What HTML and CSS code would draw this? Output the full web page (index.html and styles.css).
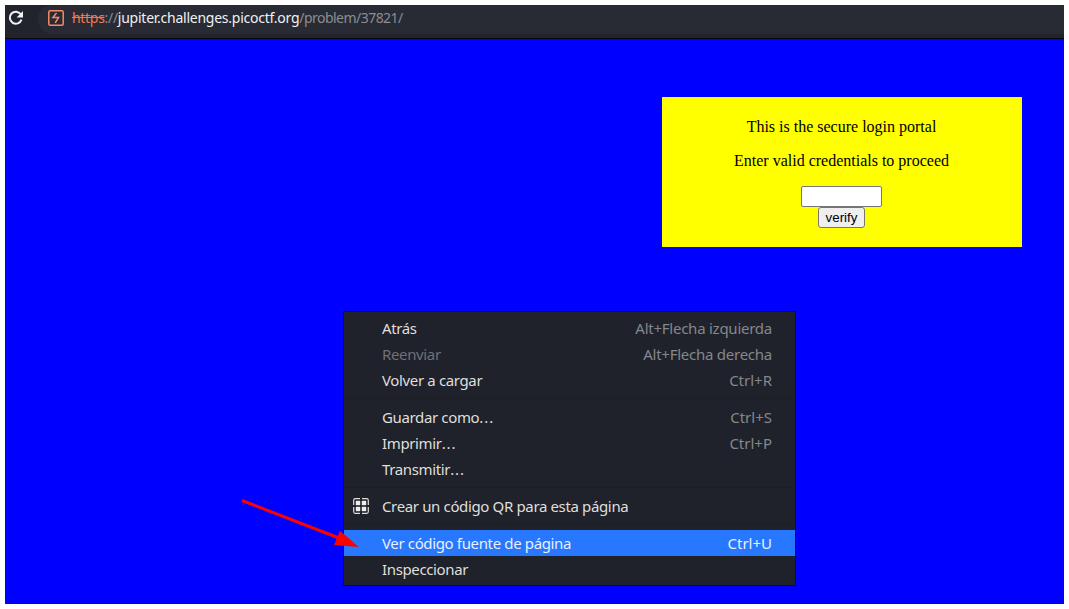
FILE: index.html
```html
<!DOCTYPE html>
<html lang="es">
<head>
<meta charset="utf-8">
<title>Login portal</title>
<link rel="stylesheet" href="styles.css">
</head>
<body>
<div class="browser">
  <header class="toolbar">
    <svg class="reload" width="16" height="16" viewBox="0 0 16 16"><path d="M12.8 4.3A6 6 0 1 0 13.5 9.7" fill="none" stroke="#f2f2f2" stroke-width="2"/><path d="M15 1v6.4H8.6z" fill="#f2f2f2"/></svg>
    <div class="address">
      <svg class="site" width="16" height="16" viewBox="0 0 16 16" fill="none" stroke="#f58b65"><rect x=".8" y=".8" width="14.4" height="14.4" rx="1.5" stroke-width="1.5"/><path d="M8.5 3 4.9 7.5h5.7L7.2 12.8" stroke-width="1.5"/></svg>
      <div class="url"><span class="scheme">https</span><span class="dim">://</span><span class="host">jupiter.challenges.picoctf.org</span><span class="dim path">/problem/37821/</span></div>
    </div>
  </header>
  <main class="page">
    <form class="login">
      <p>This is the secure login portal</p>
      <p>Enter valid credentials to proceed</p>
      <input class="field" type="text" aria-label="Password">
      <button class="verify" type="button">verify</button>
    </form>
  </main>
</div>
<nav class="menu">
  <div class="item"><span class="label">Atrás</span><kbd class="long">Alt+Flecha izquierda</kbd></div>
  <div class="item disabled"><span class="label">Reenviar</span><kbd class="long">Alt+Flecha derecha</kbd></div>
  <div class="item"><span class="label">Volver a cargar</span><kbd>Ctrl+R</kbd></div>
  <div class="separator"></div>
  <div class="item"><span class="label">Guardar como<span class="dots">...</span></span><kbd>Ctrl+S</kbd></div>
  <div class="item"><span class="label">Imprimir<span class="dots">...</span></span><kbd>Ctrl+P</kbd></div>
  <div class="item"><span class="label">Transmitir<span class="dots">...</span></span></div>
  <div class="separator"></div>
  <div class="item with-icon">
    <svg class="qr" width="16" height="16" viewBox="0 0 16 16"><path d="M.7 5V2.2Q.7.7 2.2.7H7M9 .7h4.8q1.5 0 1.5 1.5V7M15.3 9v4.8q0 1.5-1.5 1.5H9M7 15.3H2.2Q.7 15.3.7 13.8V9M.7 7V5" fill="none" stroke="#deded9" stroke-width="1.2"/><path d="M3 3h4v4H3zM9 3h4v4H9zM3 9h4v4H3zM9 9h4v4H9z" fill="#eeeeea" stroke="#eeeeea" stroke-width=".4"/></svg>
    <span class="label">Crear un código QR para esta página</span>
  </div>
  <div class="separator"></div>
  <div class="item selected"><span class="label">Ver código fuente de página</span><kbd>Ctrl+U</kbd></div>
  <div class="item"><span class="label">Inspeccionar</span></div>
</nav>
<svg class="arrow" width="120" height="52" viewBox="0 0 120 52"><path d="M2 3.5 99 41" stroke="#f00" stroke-width="3"/><path d="M100 33.8 118.7 50 94 48z" fill="#f00"/></svg>
</body>
</html>
```
FILE: styles.css
```css
body {
  margin: 0;
  height: 609px;
  overflow: hidden;
  background: #fff;
}

.browser {
  display: flex;
  flex-direction: column;
  width: 1059px;
  height: 599px;
  margin: 5px;
  background: #00f;
}

.toolbar {
  display: flex;
  box-sizing: border-box;
  height: 34px;
  padding-left: 3px;
  border-bottom: 1px solid #08090d;
  background: #22242d;
}

.reload {
  margin: 5px 14px 0 0;
}

.address {
  display: flex;
  flex: 1;
  height: 29px;
  padding-left: 10px;
  border-radius: 15px 0 0 15px;
  background: #282a34;
}

.site {
  margin: 5px 8px 0 0;
}

.url {
  font: 14px/26px "Noto Sans", sans-serif;
  letter-spacing: -0.3px;
  white-space: nowrap;
}

.scheme {
  color: #f07850;
  text-decoration: line-through;
}

.dim {
  color: #8b8e91;
}

.host {
  color: #f0f1f2;
  letter-spacing: -0.25px;
}

.path {
  letter-spacing: -0.53px;
}

.page {
  display: flex;
  flex: 1;
  justify-content: flex-end;
  padding: 58px 42px 0 0;
}

.login {
  display: flex;
  flex-direction: column;
  align-items: center;
  box-sizing: border-box;
  width: 360px;
  height: 150px;
  padding: 21px 1px 0 0;
  background: #ff0;
  color: #000;
  font: 16px/18px "Liberation Serif", serif;
}

.login p {
  margin: 0 0 16px;
}

.field {
  box-sizing: border-box;
  width: 81px;
  height: 21px;
  border: 1px solid #767676;
  border-radius: 2px;
  background: #fff;
}

.verify {
  box-sizing: border-box;
  width: 47px;
  height: 21px;
  padding: 0;
  border: 1px solid #767676;
  border-radius: 3px;
  background: #efefef;
  color: #000;
  font: 13.333px/19px "Liberation Sans", sans-serif;
}

.menu {
  position: absolute;
  top: 311px;
  left: 343px;
  box-sizing: border-box;
  width: 453px;
  height: 275px;
  padding: 3px 0;
  border: 1px solid #111218;
  background: #20222b;
  color: #dfdfdb;
  font: 15px/26px "Noto Sans", sans-serif;
}

.item {
  display: flex;
  justify-content: space-between;
  height: 26px;
  padding: 0 23px 0 38px;
  white-space: nowrap;
}

.label {
  letter-spacing: -0.36px;
}

.dots {
  letter-spacing: 0.9px;
}

.item kbd {
  color: #85878a;
  font: inherit;
}

.long {
  letter-spacing: -0.25px;
}

.disabled {
  color: #6f7175;
}

.with-icon {
  justify-content: flex-start;
  padding-left: 9px;
}

.qr {
  margin: 5px 13px 0 0;
}

.selected,
.selected kbd {
  background: #2777ff;
  color: #e9f0fb;
}

.separator {
  height: 1px;
  margin: 5px 0;
  background: #1c1e26;
}

.arrow {
  position: absolute;
  top: 497px;
  left: 240px;
}
```
